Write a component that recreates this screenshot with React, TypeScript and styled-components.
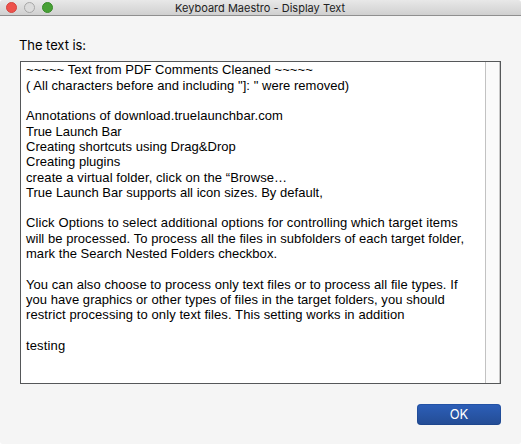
import React from "react";
import styled, { createGlobalStyle } from "styled-components";

const GlobalStyle = createGlobalStyle`
  html, body { margin: 0; padding: 0; background: #fff; }
  * { box-sizing: border-box; }
`;

const Window = styled.div`
  width: 521px;
  height: 444px;
  display: flex;
  flex-direction: column;
  overflow: hidden;
  background: #f5f5f5;
  border-radius: 3px;
  color: #000;
  font-family: "Liberation Sans", Arial, sans-serif;
`;

const TitleBar = styled.header`
  display: grid;
  grid-template-columns: 175px 1fr;
  height: 16px;
  flex: none;
  background: linear-gradient(#e8e8e8, #d0d0d0);
  border-bottom: 1px solid #8f8f8f;
`;

const Controls = styled.div`
  display: flex;
  gap: 7px;
  padding: 2px 0 0 6px;
`;

const Light = styled.span<{ $fill: string; $edge: string }>`
  width: 11px;
  height: 11px;
  border-radius: 50%;
  background: ${(p) => p.$fill};
  border: 1px solid ${(p) => p.$edge};
`;

const Title = styled.h1`
  margin: 0;
  font: 400 11px/16px Inter, "Liberation Sans", sans-serif;
  letter-spacing: 0.01px;
  color: #222;
  white-space: nowrap;
`;

const Content = styled.main`
  flex: 1;
  display: flex;
  flex-direction: column;
  padding: 20px 20px 19px;
`;

const Label = styled.label`
  height: 25px;
  font: 400 13px/18px Inter, "Liberation Sans", sans-serif;
  letter-spacing: -0.06px;
  margin-left: -1px;
`;

const TextBox = styled.section`
  display: flex;
  height: 323px;
  border: 1px solid #555759;
  background: #fff;
`;

const Lines = styled.div`
  flex: 1;
  padding: 0.34px 0 0 5px;
`;

const Line = styled.div<{ $tracking: number }>`
  height: 15.3125px;
  font-size: 13px;
  line-height: 16px;
  letter-spacing: ${(p) => p.$tracking}px;
  white-space: pre;
`;

const ScrollTrack = styled.div`
  width: 15px;
  border-left: 1px solid #c2c2c2;
  border-right: 1px solid #c8c8c8;
  background: #fafafa;
`;

const Actions = styled.footer`
  display: flex;
  justify-content: flex-end;
  margin-top: 20px;
`;

const Button = styled.button`
  width: 84px;
  height: 21px;
  padding: 0;
  border: 0;
  border-radius: 4px;
  background: linear-gradient(#2d5fb9, #234c94);
  box-shadow: inset 0 0 0 1px rgba(20, 60, 130, 0.35);
  color: #fff;
  font: 400 13px/21px Inter, "Liberation Sans", sans-serif;
`;

const lines: [string, number][] = [
  ["~~~~~ Text from PDF Comments Cleaned ~~~~~", 0.055],
  ["( All characters before and including \"]: \" were removed)", 0.045],
  ["", 0],
  ["Annotations of download.truelaunchbar.com", 0.1],
  ["True Launch Bar", -0.05],
  ["Creating shortcuts using Drag&Drop", 0.03],
  ["Creating plugins", 0.02],
  ["create a virtual folder, click on the “Browse…", 0.085],
  ["True Launch Bar supports all icon sizes. By default,", 0.02],
  ["", 0],
  ["Click Options to select additional options for controlling which target items", 0.108],
  ["will be processed. To process all the files in subfolders of each target folder,", 0.05],
  ["mark the Search Nested Folders checkbox.", 0.045],
  ["", 0],
  ["You can also choose to process only text files or to process all file types. If", 0.063],
  ["you have graphics or other types of files in the target folders, you should", 0.053],
  ["restrict processing to only text files. This setting works in addition", 0.086],
  ["", 0],
  ["testing", 0.14],
];

export default function App() {
  return (
    <>
      <GlobalStyle />
      <Window>
        <TitleBar>
          <Controls>
            <Light $fill="#ee524c" $edge="#d3453f" />
            <Light $fill="#dcdcdc" $edge="#a6a6a6" />
            <Light $fill="#47a035" $edge="#388a2a" />
          </Controls>
          <Title>Keyboard Maestro - Display Text</Title>
        </TitleBar>
        <Content>
          <Label>The text is:</Label>
          <TextBox>
            <Lines>
              {lines.map(([text, tracking], i) => (
                <Line key={i} $tracking={tracking}>{text}</Line>
              ))}
            </Lines>
            <ScrollTrack />
          </TextBox>
          <Actions>
            <Button>OK</Button>
          </Actions>
        </Content>
      </Window>
    </>
  );
}
